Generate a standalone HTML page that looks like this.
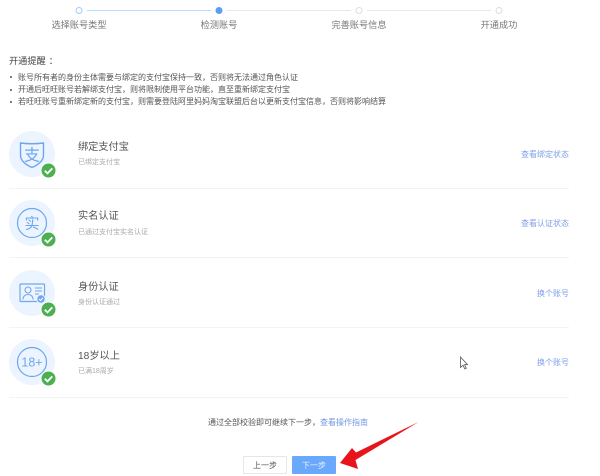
<!DOCTYPE html>
<html lang="zh"><head><meta charset="utf-8">
<style>
html,body{margin:0;padding:0;background:#fff}
body{width:600px;height:476px;overflow:hidden;position:relative;font-family:"Liberation Sans","Noto Sans CJK SC",sans-serif;color:#555}
.t{position:absolute;white-space:nowrap;line-height:1;filter:blur(.35px)}
.ln{position:absolute;height:1px;left:9px;width:560px;background:#f3f3f3}
.step{font-size:9.2px;color:#777;top:21px;text-align:center;width:80px}
.li{font-size:8px;left:18px;color:#555}
.dot{position:absolute;left:10px;width:2px;height:2px;border-radius:50%;background:#555}
.ttl{font-size:10.2px;left:78px;color:#555}
.sub{font-size:7px;left:78px;color:#aaa}
.lk{font-size:8px;right:31px;color:#7e9fe8}
svg{position:absolute;left:0;top:0}
.btn{position:absolute;top:456px;width:44px;height:18px;box-sizing:border-box;font-size:8px;line-height:18px;text-align:center;border-radius:1px;filter:blur(.3px)}
</style></head><body>

<div class="t step" style="left:39px">选择账号类型</div>
<div class="t step" style="left:179px">检测账号</div>
<div class="t step" style="left:319px">完善账号信息</div>
<div class="t step" style="left:459px">开通成功</div>

<div class="t" style="left:9px;top:57px;font-size:9.2px;color:#444">开通提醒<span style="margin-left:3px">：</span></div>
<div class="dot" style="top:76px"></div><div class="t li" style="top:74px">账号所有者的身份主体需要与绑定的支付宝保持一致，否则将无法通过角色认证</div>
<div class="dot" style="top:89px"></div><div class="t li" style="top:86px">开通后旺旺账号若解绑支付宝，则将限制使用平台功能，直至重新绑定支付宝</div>
<div class="dot" style="top:101px"></div><div class="t li" style="top:98px">若旺旺账号重新绑定新的支付宝，则需要登陆阿里妈妈淘宝联盟后台以更新支付宝信息，否则将影响结算</div>

<div class="t ttl" style="top:143px">绑定支付宝</div><div class="t sub" style="top:159px">已绑定支付宝</div><div class="t lk" style="top:151px">查看绑定状态</div>
<div class="ln" style="top:188px"></div>
<div class="t ttl" style="top:212px">实名认证</div><div class="t sub" style="top:229px">已通过支付宝实名认证</div><div class="t lk" style="top:220px">查看认证状态</div>
<div class="ln" style="top:257px"></div>
<div class="t ttl" style="top:283px">身份认证</div><div class="t sub" style="top:299px">身份认证通过</div><div class="t lk" style="top:290px">换个账号</div>
<div class="ln" style="top:327px"></div>
<div class="t ttl" style="top:352px">18岁以上</div><div class="t sub" style="top:368px">已满18周岁</div><div class="t lk" style="top:359px">换个账号</div>
<div class="ln" style="top:397px"></div>

<div class="t" style="left:208px;top:419px;font-size:8px;color:#555">通过全部校验即可继续下一步，<span style="color:#6f97e6">查看操作指南</span></div>

<div class="btn" style="left:243px;background:#fff;border:1px solid #e6e6e6;color:#555;line-height:17px">上一步</div>
<div class="btn" style="left:292px;background:#69a8fb;color:#e8f2ff;line-height:19px">下一步</div>

<svg width="600" height="476" viewBox="0 0 600 476" fill="none">
  <line x1="87" y1="10.5" x2="211" y2="10.5" stroke="#bcdcfb" stroke-width="1"/>
  <line x1="227" y1="10.5" x2="351" y2="10.5" stroke="#e8e8e8" stroke-width="1"/>
  <line x1="367" y1="10.5" x2="491" y2="10.5" stroke="#e8e8e8" stroke-width="1"/>
  <circle cx="79" cy="10.5" r="3" fill="#fff" stroke="#a3cdf7"/>
  <circle cx="219" cy="10.5" r="3.5" fill="#5b9df5"/>
  <circle cx="359" cy="10.5" r="3" fill="#fff" stroke="#ddd"/>
  <circle cx="499" cy="10.5" r="3" fill="#fff" stroke="#ddd"/>

  <circle cx="32" cy="154" r="23" fill="#ebf4ff"/>
  <circle cx="32" cy="223" r="23" fill="#ebf4ff"/>
  <circle cx="32" cy="293" r="23" fill="#ebf4ff"/>
  <circle cx="32" cy="362" r="23" fill="#ebf4ff"/>

  <path d="M20.5 143 Q32 144.5 43.5 143 V155 Q43.5 162.5 32 167.5 Q20.5 162.5 20.5 155 Z" stroke="#6ea6ef" stroke-width="1.4"/>
  <text x="32" y="160.5" font-size="16" text-anchor="middle" fill="#6ea6ef" font-family="'Liberation Sans','Noto Sans CJK SC',sans-serif">支</text>

  <circle cx="32" cy="223" r="14.5" stroke="#6ea6ef" stroke-width="1.2"/>
  <text x="32" y="228.5" font-size="15" text-anchor="middle" fill="#6ea6ef" font-family="'Liberation Sans','Noto Sans CJK SC',sans-serif">实</text>

  <rect x="20" y="284" width="24.5" height="17.5" rx="1" stroke="#6ea6ef" stroke-width="1.2"/>
  <circle cx="28" cy="290" r="3" stroke="#6ea6ef" stroke-width="1.1"/>
  <path d="M22.8 299.5 Q23.5 294.5 28 294.5 Q32.5 294.5 33.2 299.5" stroke="#6ea6ef" stroke-width="1.1"/>
  <path d="M35 288H42M35 291H42M35 294H39" stroke="#6ea6ef" stroke-width="1"/>
  <circle cx="41" cy="299" r="4.2" fill="#6ea6ef" stroke="#ebf4ff"/>
  <path d="M39 299l1.5 1.5 2.5-2.7" stroke="#fff" stroke-width="1"/>

  <circle cx="32" cy="362" r="14.5" stroke="#6ea6ef" stroke-width="1.2"/>
  <text x="32" y="366.5" font-size="12.5" text-anchor="middle" fill="#6ea6ef" font-family="'Liberation Sans',sans-serif">18+</text>

  <circle cx="48.5" cy="170.5" r="7.5" fill="#4caf50" stroke="#fff" stroke-width="1"/>
  <path d="M44.8 170.7l2.7 2.7 4.8-5" stroke="#fff" stroke-width="1.8"/>
  <circle cx="48.5" cy="239.5" r="7.5" fill="#4caf50" stroke="#fff" stroke-width="1"/>
  <path d="M44.8 239.7l2.7 2.7 4.8-5" stroke="#fff" stroke-width="1.8"/>
  <circle cx="48.5" cy="309.5" r="7.5" fill="#4caf50" stroke="#fff" stroke-width="1"/>
  <path d="M44.8 309.7l2.7 2.7 4.8-5" stroke="#fff" stroke-width="1.8"/>
  <circle cx="48.5" cy="378.5" r="7.5" fill="#4caf50" stroke="#fff" stroke-width="1"/>
  <path d="M44.8 378.7l2.7 2.7 4.8-5" stroke="#fff" stroke-width="1.8"/>

  <path d="M460.5 357V367.5L463 365.2L464.8 369L466.3 368.3L464.6 364.6H467.5Z" fill="#fff" stroke="#555" stroke-width=".8"/>

  <path d="M418.5 422 L356 452.5 L352 448 L340 463 L358 469 L355.5 460 Z" fill="#e8141c"/>
</svg>
</body></html>
